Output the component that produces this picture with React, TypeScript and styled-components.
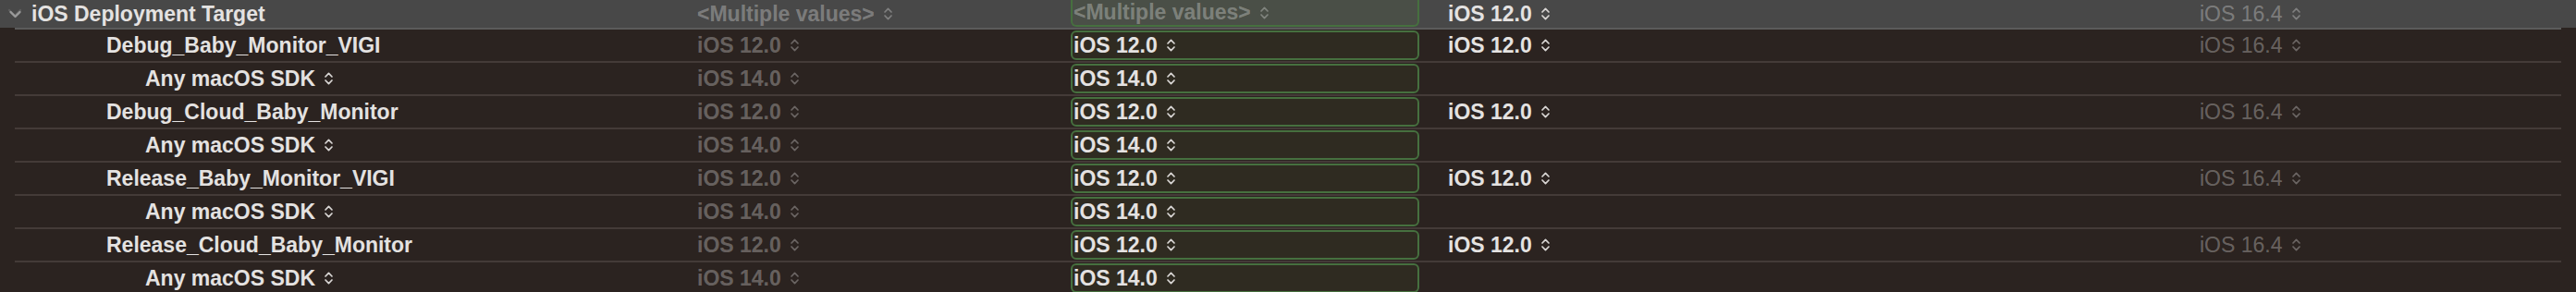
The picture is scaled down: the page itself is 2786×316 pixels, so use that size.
import { createGlobalStyle } from "styled-components";
import styled from "styled-components";

const GlobalStyle = createGlobalStyle`
  html, body {
    margin: 0;
    padding: 0;
    background: #2b2320;
    overflow: hidden;
  }
  body {
    font-family: "Liberation Sans", Arial, sans-serif;
  }
`;

const Table = styled.div`
  width: 2786px;
  height: 316px;
  overflow: hidden;
  background: #2b2320;
`;

const HeaderRow = styled.div`
  display: grid;
  grid-template-columns: 754px 404px 377px 844px 1fr;
  height: 30px;
  background: #484848;
`;

const Row = styled.div<{ $first?: boolean }>`
  display: grid;
  grid-template-columns: 738px 404px 377px 844px 1fr;
  height: 34px;
  margin: 0 16px;
  border-top: 2px solid ${(p) => (p.$first ? "#5b5b5b" : "#443b38")};
`;

const Cell = styled.div<{ $pad?: number; $gap?: number }>`
  display: flex;
  align-items: center;
  gap: ${(p) => p.$gap ?? 9}px;
  padding-left: ${(p) => p.$pad ?? 0}px;
  min-width: 0;
  white-space: nowrap;
`;

const Label = styled.span<{ $dim?: boolean; $regular?: boolean }>`
  font-size: 23px;
  font-weight: ${(p) => (p.$regular ? 400 : 700)};
  color: ${(p) => (p.$dim ? "rgba(255, 255, 255, 0.3)" : "#e4e2e1")};
`;

const TargetBox = styled.div<{ $top?: boolean }>`
  display: flex;
  align-items: center;
  gap: 9px;
  padding-left: 1px;
  margin: ${(p) => (p.$top ? "0 0 1px" : "1px 0")};
  border: 2px solid #46703f;
  border-top: ${(p) => (p.$top ? "none" : "2px solid #46703f")};
  border-radius: ${(p) => (p.$top ? "0 0 6px 6px" : "6px")};
  background: ${(p) => (p.$top ? "#4a4f47" : "#2f2b21")};
  white-space: nowrap;
`;

function Stepper({ dim }: { dim?: boolean }) {
  const c = dim ? "rgba(255,255,255,0.3)" : "#d9d6d4";
  return (
    <svg width="11" height="16" viewBox="0 0 11 16" fill="none">
      <path d="M2 6 L5.5 2.4 L9 6" stroke={c} strokeWidth="1.7" strokeLinecap="round" strokeLinejoin="round" />
      <path d="M2 10 L5.5 13.6 L9 10" stroke={c} strokeWidth="1.7" strokeLinecap="round" strokeLinejoin="round" />
    </svg>
  );
}

function Value({ text, dim, regular }: { text: string; dim?: boolean; regular?: boolean }) {
  return (
    <>
      <Label $dim={dim} $regular={regular}>{text}</Label>
      <Stepper dim={dim} />
    </>
  );
}

const configs = [
  "Debug_Baby_Monitor_VIGI",
  "Debug_Cloud_Baby_Monitor",
  "Release_Baby_Monitor_VIGI",
  "Release_Cloud_Baby_Monitor",
];

export default function App() {
  return (
    <>
      <GlobalStyle />
      <Table>
        <HeaderRow>
          <Cell $pad={8} $gap={10}>
            <svg width="16" height="14" viewBox="0 0 16 14" fill="none">
              <path d="M2 3 L8 9 L14 3" stroke="#5e5e5e" strokeWidth="2.4" strokeLinecap="round" strokeLinejoin="round" />
              <path d="M3.5 5 L8.5 10 L13.5 5" stroke="#9a9a9a" strokeWidth="2.4" strokeLinecap="round" strokeLinejoin="round" />
            </svg>
            <Label>iOS Deployment Target</Label>
          </Cell>
          <Cell>
            <Value text="<Multiple values>" dim />
          </Cell>
          <TargetBox $top>
            <Value text="<Multiple values>" dim />
          </TargetBox>
          <Cell $pad={31}>
            <Value text="iOS 12.0" />
          </Cell>
          <Cell>
            <Value text="iOS 16.4" dim regular />
          </Cell>
        </HeaderRow>

        {configs.map((name, i) => (
          <div key={name}>
            <Row $first={i === 0}>
              <Cell $pad={99}>
                <Label>{name}</Label>
              </Cell>
              <Cell>
                <Value text="iOS 12.0" dim />
              </Cell>
              <TargetBox>
                <Value text="iOS 12.0" />
              </TargetBox>
              <Cell $pad={31}>
                <Value text="iOS 12.0" />
              </Cell>
              <Cell>
                <Value text="iOS 16.4" dim regular />
              </Cell>
            </Row>
            <Row>
              <Cell $pad={141}>
                <Value text="Any macOS SDK" />
              </Cell>
              <Cell>
                <Value text="iOS 14.0" dim />
              </Cell>
              <TargetBox>
                <Value text="iOS 14.0" />
              </TargetBox>
              <Cell />
              <Cell />
            </Row>
          </div>
        ))}
      </Table>
    </>
  );
}
